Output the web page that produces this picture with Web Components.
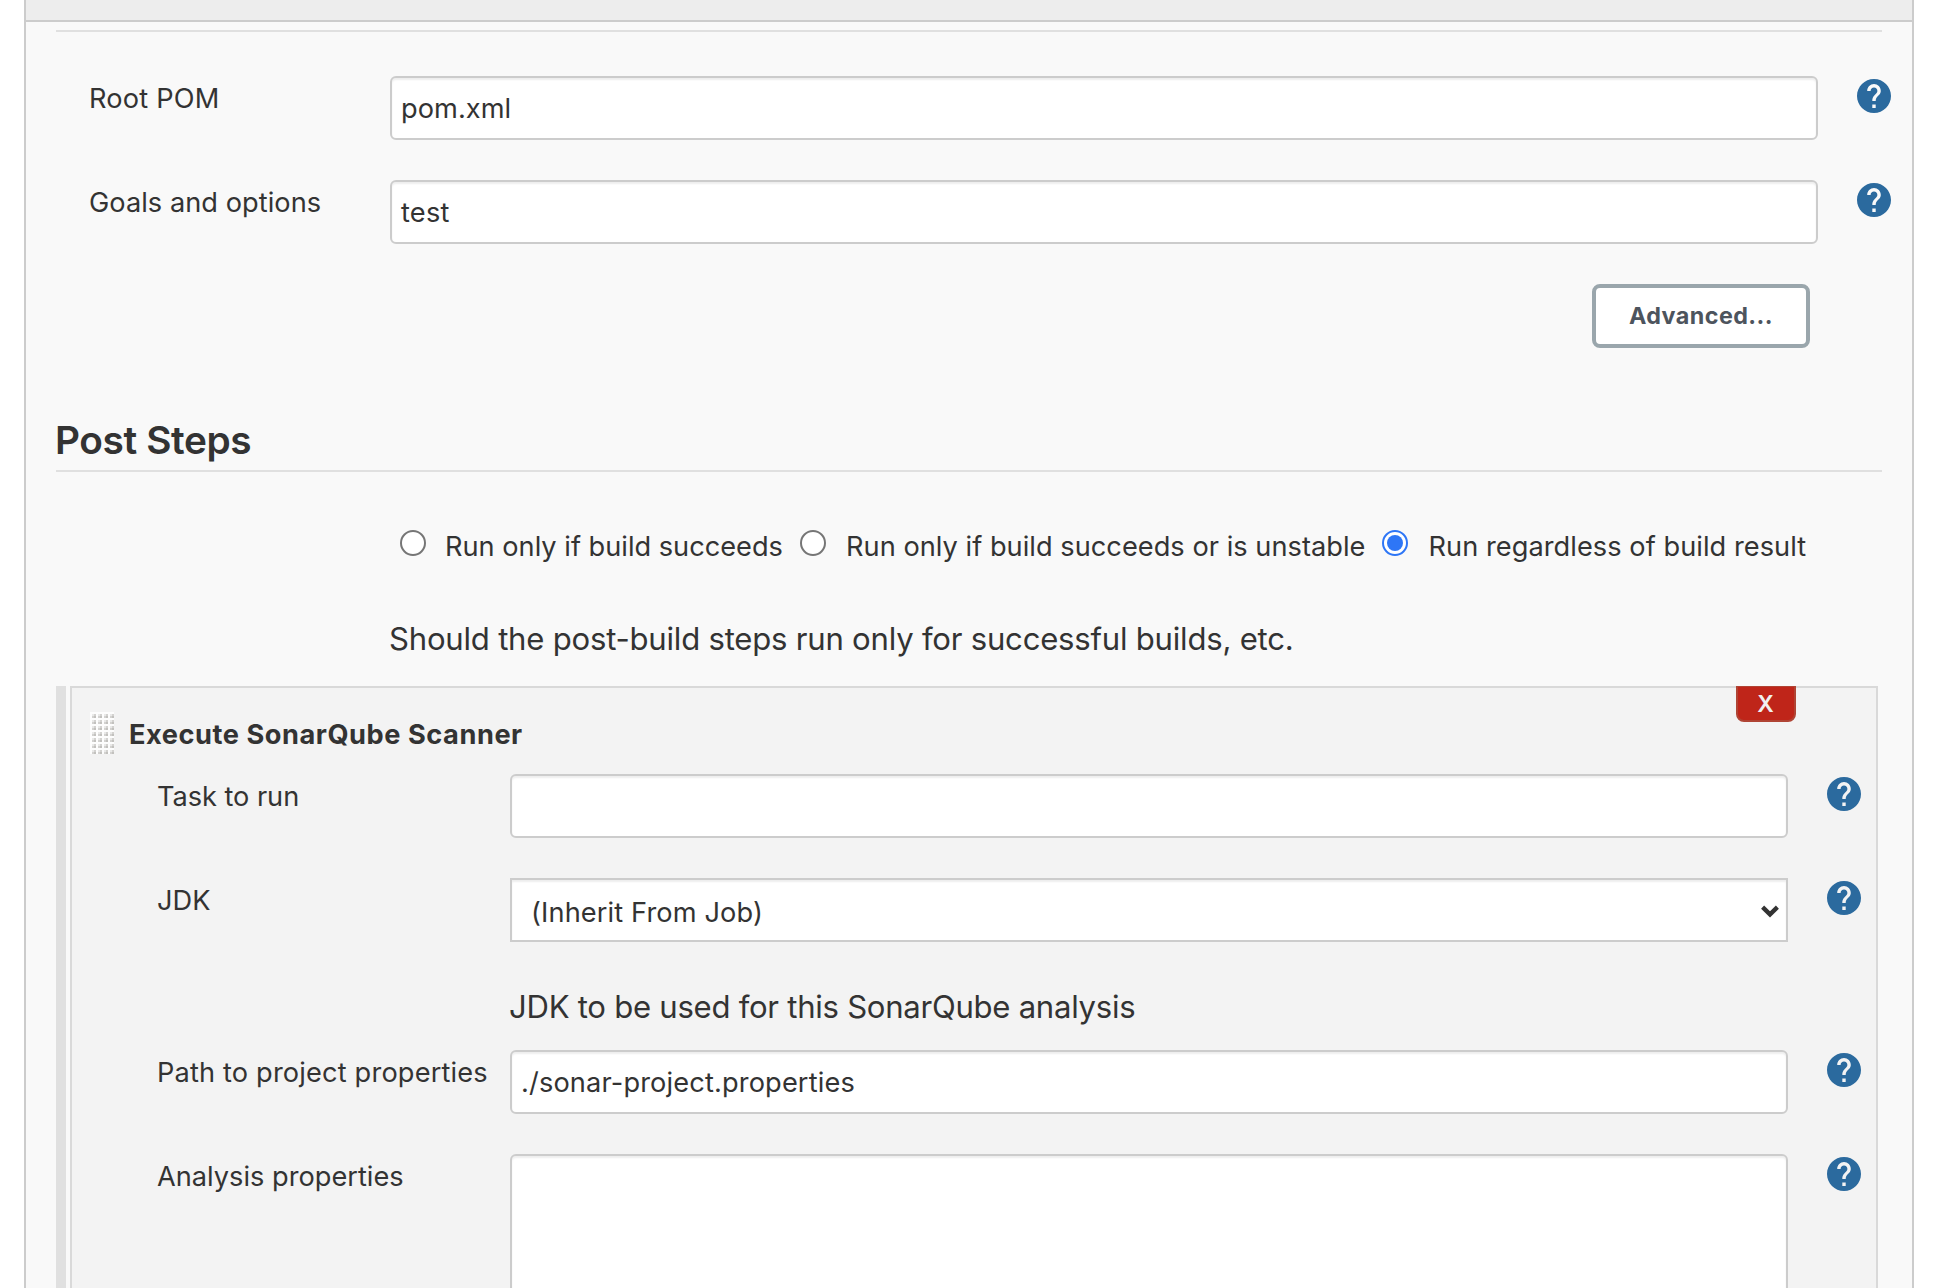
<!DOCTYPE html>
<html lang="en">
<head>
<meta charset="utf-8">
<title>Job configuration</title>
<style>
html,body{margin:0;height:100%;overflow:hidden;background:#fff}
body{font-family:Inter,"Liberation Sans",sans-serif;font-size:27.2px;line-height:40px;color:#333}
</style>
</head>
<body>
<config-panel>
  <form-entry label="Root POM" help style="--ls:.2px"><text-field value="pom.xml" style="--ls:.05px"></text-field></form-entry>
  <form-entry label="Goals and options" help style="--ls:.04px"><text-field value="test" style="--ls:.2px"></text-field></form-entry>
  <push-button>Advanced...</push-button>
  <section-heading>Post Steps</section-heading>
  <radio-group>
    <radio-choice style="width:400px;--ls:0px">Run only if build succeeds</radio-choice>
    <radio-choice style="width:582px;--gap:20px;--ls:.03px">Run only if build succeeds or is unstable</radio-choice>
    <radio-choice checked style="--gap:20.5px;--ls:.05px">Run regardless of build result</radio-choice>
  </radio-group>
  <help-note style="margin:49px 0 23px 363px;--ls:-.22px">Should the post-build steps run only for successful builds, etc.</help-note>
  <build-step heading="Execute SonarQube Scanner">
    <form-entry label="Task to run" help nested style="--ls:-.05px"><text-field></text-field></form-entry>
    <form-entry label="JDK" help nested style="--ls:0px"><select-field value="(Inherit From Job)" style="--ls:.12px"></select-field></form-entry>
    <help-note style="margin:1px 0 19px 437px;--ls:-.27px">JDK to be used for this SonarQube analysis</help-note>
    <form-entry label="Path to project properties" help nested style="--ls:.16px"><text-field value="./sonar-project.properties" style="--ls:.14px"></text-field></form-entry>
    <form-entry label="Analysis properties" help nested style="--ls:0px"><text-field multiline></text-field></form-entry>
  </build-step>
</config-panel>
<script>
const define = (name, markup, setup) => customElements.define(name, class extends HTMLElement {
  constructor() {
    super();
    this.attachShadow({ mode: 'open' }).innerHTML = markup;
  }
  connectedCallback() { if (setup) setup(this, this.shadowRoot); }
});

define('config-panel', `
<style>
:host{display:flex;flex-direction:column;box-sizing:border-box;height:100vh;margin:0 32px 0 24px;border:solid #ccc;border-width:0 2px;background:#f9f9f9;overflow:hidden}
header{flex:none;height:20px;background:#ededed;border-bottom:2px solid #ccc}
hr{flex:none;margin:8px 30px 44px;border:0;height:2px;background:#e0e0e0}
</style>
<header></header><hr><slot></slot>`);

define('help-icon', `
<style>:host{display:block;width:34px;height:34px}svg{display:block}</style>
<svg width="34" height="34" viewBox="2 2 20 20"><path fill="#2b6a9e" d="M12 2C6.48 2 2 6.48 2 12s4.48 10 10 10 10-4.48 10-10S17.52 2 12 2zm1 17h-2v-2h2v2zm2.07-7.75l-.9.92C13.45 12.9 13 13.5 13 15h-2v-.5c0-1.1.45-2.1 1.17-2.83l1.24-1.26c.37-.36.59-.86.59-1.41 0-1.1-.9-2-2-2s-2 .9-2 2H8c0-2.21 1.79-4 4-4s4 1.79 4 4c0 .88-.36 1.68-.93 2.25z"/></svg>`);

define('form-entry', `
<style>
:host{display:grid;flex:none;grid-template-columns:301px 1428px 34px;column-gap:0;padding-left:63px;margin-bottom:40px;align-items:start}
:host([nested]){grid-template-columns:353px 1278px 34px;padding-left:85px}
.label{padding-top:3px;letter-spacing:var(--ls);white-space:nowrap}
help-icon{margin:3px 0 0 39px}
</style>
<div class="label"></div><slot></slot><help-icon></help-icon>`,
(el, root) => { root.querySelector('.label').textContent = el.getAttribute('label'); });

define('text-field', `
<style>
:host{display:flex;box-sizing:border-box;height:64px;border:2px solid #ccc;border-radius:6px;background:#fff;box-shadow:inset 0 2px 2px rgba(0,0,0,.07);padding:11px 9px 0;letter-spacing:var(--ls)}
:host([multiline]){height:240px}
</style>
<span></span>`,
(el, root) => { root.querySelector('span').textContent = el.getAttribute('value') || ''; });

define('select-field', `
<style>
:host{display:flex;justify-content:space-between;box-sizing:border-box;height:64px;border:2px solid #ccc;background:#fff;box-shadow:inset 0 2px 2px rgba(0,0,0,.07);padding:13px 7px 0 19px;letter-spacing:var(--ls)}
svg{margin-top:11.5px}
</style>
<span></span><svg width="18" height="13" viewBox="0 0 18 13"><path d="M1.6 2.1 9 9.4 16.4 2.1" fill="none" stroke="#333" stroke-width="4.3"/></svg>`,
(el, root) => { root.querySelector('span').textContent = el.getAttribute('value'); });

define('push-button', `
<style>
:host{display:flex;flex:none;align-self:flex-end;box-sizing:border-box;width:218px;height:64px;margin-right:102px;border:4px solid #9aa6ac;border-radius:8px;background:#fff;justify-content:center;color:#4d545d;font-size:23.3px;font-weight:700;letter-spacing:.45px;line-height:56px}
</style>
<slot></slot>`);

define('section-heading', `
<style>
:host{display:flex;flex:none;align-items:flex-end;box-sizing:border-box;height:124px;margin:0 30px 54px;padding-bottom:6px;border-bottom:2px solid #e0e0e0;font-size:38.8px;font-weight:600;line-height:48px;letter-spacing:-.4px;text-indent:-1px}
</style>
<slot></slot>`);

define('radio-group', `
<style>:host{display:flex;flex:none;height:40px;padding-left:374px}</style><slot></slot>`);

define('radio-choice', `
<style>
:host{display:flex;flex:none;gap:var(--gap,19px);letter-spacing:var(--ls);white-space:nowrap}
span{padding-top:1px}
i{flex:none;display:flex;box-sizing:border-box;width:26px;height:26px;margin-top:4px;border:2px solid #767676;border-radius:50%;background:#fff}
:host([checked]) i{border-color:#2e76f6}
:host([checked]) i::after{content:"";width:16px;height:16px;margin:3px;border-radius:50%;background:#2e76f6}
</style>
<i></i><span><slot></slot></span>`);

define('help-note', `
<style>:host{display:block;flex:none;font-size:31.1px;line-height:48px;letter-spacing:var(--ls);white-space:nowrap}</style><slot></slot>`);

define('drag-grip', `
<style>:host{display:block;width:24px;height:42px}svg{display:block}</style>
<svg width="24" height="42">
<defs><pattern id="dots" width="6" height="6" patternUnits="userSpaceOnUse">
<rect width="6" height="6" fill="#fdfdfd"/><rect x="2" y="2" width="4" height="4" fill="#d3d2d0"/><rect x="2" y="2" width="2" height="2" fill="#e9e9e8"/><rect x="4" y="4" width="2" height="2" fill="#c2c1be"/>
</pattern></defs>
<rect width="24" height="42" fill="url(#dots)"/></svg>`);

define('build-step', `
<style>
:host{display:flex;flex:none;margin:0 34px 0 30px;gap:4px;height:640px}
.bar{flex:none;width:10px;background:#e0e0e0}
.box{flex:1;position:relative;display:flex;flex-direction:column;box-sizing:border-box;border:2px solid #d9d9d9;background:#f3f3f3;padding-top:24px}
.title{display:flex;gap:15px;height:42px;padding-left:18px;margin-bottom:20px;font-weight:700;letter-spacing:.54px}
.title span{padding-top:3px}
.delete{position:absolute;top:-2px;right:80px;box-sizing:border-box;width:60px;height:36px;border:solid #b04434;border-width:1px 2px 2px;border-radius:0 0 8px 8px;background:#bf2519;color:#f0f0f0;font-size:23px;font-weight:600;line-height:35px;text-align:center;text-indent:-1px}
</style>
<div class="bar"></div>
<div class="box">
<div class="title"><drag-grip></drag-grip><span></span></div>
<slot></slot>
<div class="delete">X</div>
</div>`,
(el, root) => { root.querySelector('.title span').textContent = el.getAttribute('heading'); });
</script>
</body>
</html>
